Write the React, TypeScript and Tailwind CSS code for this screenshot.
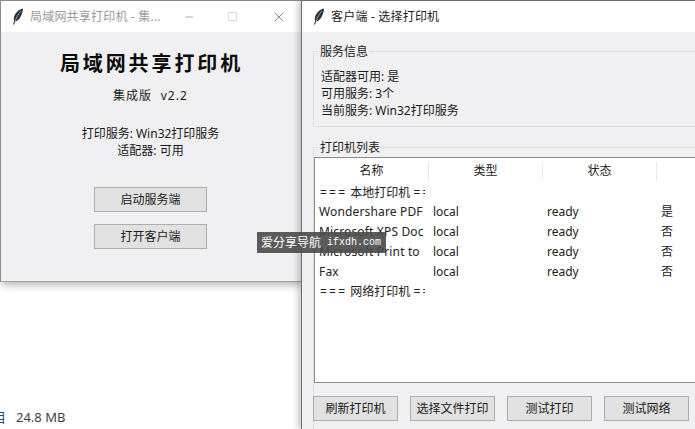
import { X, Minus } from 'lucide-react';

const font = { fontFamily: '"Noto Sans", "Noto Sans CJK SC", sans-serif' };

const btnCls = 'flex items-center justify-center h-[25px] border border-[#adadad] bg-[#e1e1e1] text-[12px] text-[#1a1a1a]';

const printers = [
  ['Wondershare PDF', 'local', 'ready', '是'],
  ['Microsoft XPS Doc', 'local', 'ready', '否'],
  ['Microsoft Print to', 'local', 'ready', '否'],
  ['Fax', 'local', 'ready', '否'],
];

function Feather() {
  return (
    <svg width="12" height="17" viewBox="0 0 12 17" className="shrink-0">
      <path d="M11 0.5C6.5 1.5 3 5 2 9.5c-.3 1.5-.2 2.8.2 3.6L1 16.5h1l1.2-3C7 13 10.5 7 11 .5z" fill="#26303a" />
      <path d="M9 3C6.5 5.5 4.5 9 3.2 13.5" stroke="#c9d3da" strokeWidth="0.7" fill="none" />
    </svg>
  );
}

function TitleBar({ title, children, className }: { title: string; children?: React.ReactNode; className?: string }) {
  return (
    <div className="flex items-center h-[31px] bg-white shrink-0 pl-[11px]">
      <Feather />
      <span className={`ml-[6px] text-[12px] tracking-[0.2px] whitespace-nowrap ${className}`}>{title}</span>
      {children}
    </div>
  );
}

function Group({ label, className, children }: { label: string; className?: string; children: React.ReactNode }) {
  return (
    <div className={`border border-[#dcdcdc] ${className}`}>
      <div className="-mt-[9px] ml-[5px] h-[17px] leading-[17px] text-[12px] text-[#222] w-fit px-px bg-[#f0eff1]">{label}</div>
      {children}
    </div>
  );
}

function SepRow({ name, className }: { name: string; className?: string }) {
  return (
    <div className={`w-[110px] pl-[5px] overflow-hidden whitespace-nowrap text-[12px] text-[#222] ${className}`}>
      <span className="tracking-[2.2px]">===</span> {name} <span className="tracking-[2.2px]">===</span>
    </div>
  );
}

function LeftWindow() {
  return (
    <div className="absolute left-0 top-0 w-[301px] h-[282px] flex flex-col bg-[#f0eff1] border-t border-l border-b border-[#8a8a8a] border-b-[#a0a0a0] shadow-[2px_3px_8px_rgba(0,0,0,0.3)]">
      <TitleBar title="局域网共享打印机 - 集..." className="text-[#9a9a9a]">
        <Minus size={12} strokeWidth={1} className="ml-[22px] text-[#555]" />
        <div className="ml-[33px] w-[9px] h-[9px] border border-[#dcdcdc]" />
        <X size={16} strokeWidth={1} className="ml-[34px] text-[#555]" />
      </TitleBar>
      <div className="flex flex-col items-center text-[#1a1a1a] pr-[1px]">
        <h1 className="ml-[2px] mt-[17px] h-[30px] leading-[30px] text-[20px] font-bold tracking-[2.9px] text-[#0c0c0c]">局域网共享打印机</h1>
        <p className="mt-[8px] h-[18px] leading-[18px] text-[12px] tracking-[1.1px] whitespace-pre">集成版  v2.2</p>
        <p className="mt-[20px] h-[17px] leading-[17px] text-[12px]">打印服务: Win32打印服务</p>
        <p className="h-[17px] leading-[17px] text-[12px]">适配器: 可用</p>
        <div className={`${btnCls} mt-[28px] w-[113px]`}>启动服务端</div>
        <div className={`${btnCls} mt-[12px] w-[113px]`}>打开客户端</div>
      </div>
    </div>
  );
}

function RightWindow() {
  return (
    <div className="absolute left-[301px] top-0 w-[400px] h-[429px] flex flex-col bg-[#f0eff1] border-t border-l border-[#6e6e6e] shadow-[-3px_0_6px_rgba(0,0,0,0.22)]">
      <TitleBar title="客户端 - 选择打印机" className="text-[#222]">
        <Minus size={12} strokeWidth={1} className="ml-[262px] text-[#333]" />
      </TitleBar>
      <div className="flex flex-col pl-[11px]">
        <Group label="服务信息" className="mt-[19px] h-[76px] w-[400px]">
          <div className="pl-[7px] pt-[8px] text-[12px] leading-[17px] text-[#1a1a1a]">
            <p>适配器可用: 是</p>
            <p>可用服务: 3个</p>
            <p>当前服务: Win32打印服务</p>
          </div>
        </Group>
        <Group label="打印机列表" className="mt-[20px] w-[400px] h-[300px]">
          <div className="mt-px h-[226px] border border-[#8c8c8c] bg-white">
            <div className="grid grid-cols-[114px_114px_114px_114px] h-[26px] items-center text-[12px] text-[#222]">
              <div className="text-center border-r border-[#e8e8e8]">名称</div>
              <div className="text-center border-r border-[#e8e8e8]">类型</div>
              <div className="text-center border-r border-[#e8e8e8]">状态</div>
            </div>
            <SepRow name="本地打印机" className="h-[18px] leading-[17px]" />
            {printers.map((p) => (
              <div key={p[0]} className="grid grid-cols-[114px_114px_114px_114px] h-[20px] items-center text-[12px] text-[#222]">
                <div className="pl-[4px] w-[110px] tracking-[0.15px] overflow-hidden whitespace-nowrap">{p[0]}</div>
                <div className="pl-[4px]">{p[1]}</div>
                <div className="pl-[4px]">{p[2]}</div>
                <div className="pl-[4px]">{p[3]}</div>
              </div>
            ))}
            <SepRow name="网络打印机" className="h-[20px] leading-[20px]" />
          </div>
        </Group>
      </div>
      <div className="absolute left-[11px] top-[395px] flex gap-[12px]">
        {['刷新打印机', '选择文件打印', '测试打印', '测试网络'].map((b) => (
          <div key={b} className={`${btnCls} w-[85px]`}>{b}</div>
        ))}
      </div>
    </div>
  );
}

export default function App() {
  return (
    <div className="relative w-[695px] h-[429px] overflow-hidden bg-white" style={font}>
      <div className="absolute left-0 top-[410px] flex items-center h-[16px] text-[13px] text-[#3f3f3f]">
        <span className="w-[16px] -ml-[7px] text-[#2a4a7a]">目</span>
        <span className="ml-[7px]">24.8 MB</span>
      </div>
      <LeftWindow />
      <RightWindow />
      <div className="absolute left-[257px] top-[232px] w-[129px] h-[21px] flex items-center pl-[4px] bg-[#4a4a4a]/90 text-white text-[12px] whitespace-nowrap">
        爱分享导航<span className="ml-[6px] text-[10px] font-['Liberation_Mono']">ifxdh.com</span>
      </div>
    </div>
  );
}
